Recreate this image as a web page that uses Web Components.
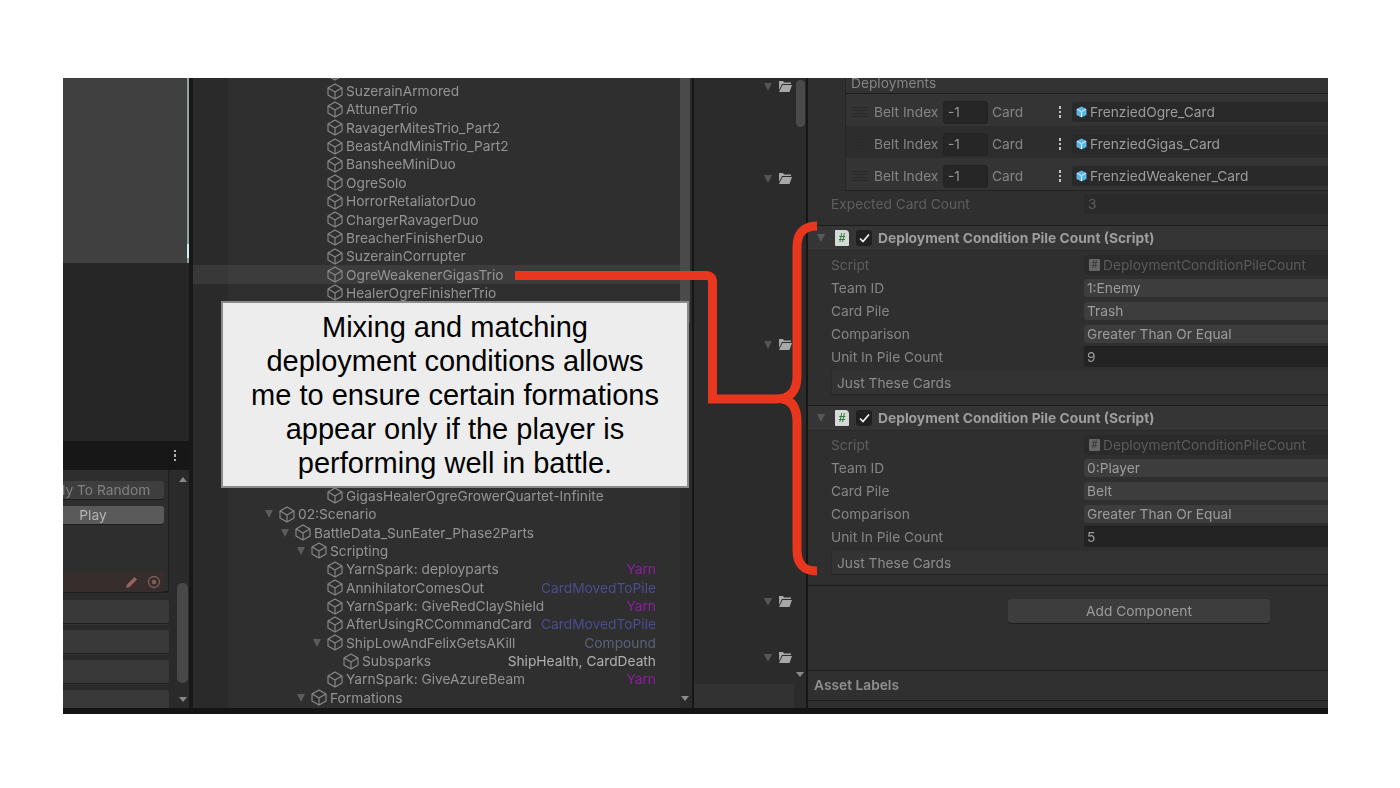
<!DOCTYPE html>
<html>
<head>
<meta charset="utf-8">
<title>Deployment conditions</title>
<style>
  html, body { margin: 0; background: #fff; }
  body { padding: 78px 72px 74px 63px; font-family: Inter, "Liberation Sans", sans-serif; }
</style>
</head>
<body>
<editor-shot>
  <left-dock></left-dock>
  <tree-panel></tree-panel>
  <project-panel></project-panel>
  <inspector-panel></inspector-panel>
  <connector-line slot="over"></connector-line>
  <callout-box slot="over">Mixing and matching<br>deployment conditions allows<br>me to ensure certain formations<br>appear only if the player is<br>performing well in battle.</callout-box>
</editor-shot>

<script>
const cubeIcon = `<svg width="16" height="17" viewBox="0 0 16 17" fill="none" stroke="#8c8c8c" stroke-width="1.1" stroke-linejoin="round"><path d="M8 1.1 15 5v7.100L8 16 1 12.100V5Z"/><path d="M1.200 5.100 8 9l6.800-3.900M8 9v6.800"/></svg>`

const makeEl = (name, css, html) => {
  customElements.define(name, class extends HTMLElement {
    constructor() {
      super()
      const root = this.attachShadow({ mode: 'open' })
      root.innerHTML = `<style>${css}</style>${typeof html === 'function' ? html(this) : html}`
    }
  })
}

makeEl('editor-shot', `
  :host { display: block; position: relative; width: 1265px; height: 636px; overflow: hidden; background: #141414; }
  .panels { display: flex; height: 630px; filter: blur(.45px); }
`, `<div class="panels"><slot></slot></div><slot name="over"></slot>`)

makeEl('connector-line', `
  :host { display: block; position: absolute; inset: 0; pointer-events: none; }
  svg { display: block; }
`, `<svg width="1265" height="636" viewBox="63 78 1265 636" fill="none" stroke="#e8361f" stroke-width="9">
  <path d="M515 275.5H706q6.500 0 6.500 6.500V399H776Q797 399 797 376V247Q797 226 817 226"/>
  <path d="M782 399Q797 401 797 422V550Q797 571 817 571"/>
</svg>`)

makeEl('callout-box', `
  :host {
    display: flex; align-items: center; justify-content: center; position: absolute; left: 158px; top: 223px;
    box-sizing: border-box; width: 468px; height: 187px; padding-top: 1px; background: #ededed; border: 2px solid #8a8a8a;
    font: 29px/34px "Liberation Sans", Arial, sans-serif; color: #000; text-align: center; white-space: nowrap;
  }
`, `<div><slot></slot></div>`)

makeEl('left-dock', `
  :host { display: flex; flex-direction: column; flex: none; box-sizing: border-box; width: 130px; border-right: 4px solid #181818; font-size: 13.750px; overflow: hidden; }
  .game { height: 185px; background: #404040; border-right: 2px solid #8ca4a4; position: relative; flex: none; }
  .game i { position: absolute; right: -2px; top: 166px; width: 2px; height: 14px; background: #cfeeee; }
  .blank { height: 178px; background: #262626; flex: none; }
  .tab { height: 29px; background: #171717; flex: none; display: flex; justify-content: flex-end; align-items: center; padding-right: 13px; }
  .tab b { display: flex; flex-direction: column; gap: 2px; }
  .tab b i { width: 2.500px; height: 2.500px; background: #b0b0b0; }
  .body { flex: 1; display: flex; background: #2a2a2a; min-height: 0; }
  .stack { width: 106px; flex: none; overflow: hidden; display: flex; flex-direction: column; }
  .group { height: 123px; background: #2e2e2e; border: solid #1f1f1f; border-width: 0 1px 2px 0; border-radius: 0 0 3px 0; flex: none; box-sizing: border-box; display: flex; flex-direction: column; align-items: flex-end; padding: 11px 4px 0 0; }
  .btn { flex: none; width: 142px; height: 18px; border-radius: 3px; background: #3e3e3e; color: #808080; text-align: center; line-height: 18px; box-shadow: 0 1px 0 #1d1d1d; white-space: nowrap; }
  .btn.play { margin-top: 7px; background: #5a5a5a; color: #b4b4b4; }
  .pick { margin-top: 48px; width: 142px; height: 20px; flex: none; background: #382d2d; border-radius: 3px; display: flex; justify-content: flex-end; align-items: center; gap: 8px; padding-right: 3px; box-sizing: border-box; }
  .row { flex: none; height: 23px; margin-top: 7px; background: #393939; box-shadow: 0 1px 0 #1e1e1e, 0 2px 0 #333; border-radius: 0 2px 2px 0; }
  .row.first { margin-top: 7px; }
  .bar { width: 20px; flex: none; position: relative; }
  .bar i { position: absolute; left: 10px; width: 0; height: 0; border: solid transparent; border-width: 0 4px; }
  .up { top: 7px; border-bottom: 5px solid #888 !important; }
  .down { top: 227px; border-top: 5px solid #888 !important; }
  .thumb { position: absolute; left: 8px; top: 113px; width: 11px; height: 100px; background: #484848; border-radius: 5px; }
`, `
  <div class="game"><i></i></div>
  <div class="blank"></div>
  <div class="tab"><b><i></i><i></i><i></i></b></div>
  <div class="body">
    <div class="stack">
      <div class="group">
        <div class="btn">Apply To Random</div>
        <div class="btn play">Play</div>
        <div class="pick">
          <svg width="14" height="14" viewBox="0 0 14 14"><path d="M1 13 2 9.500 9.500 2 12 4.500 4.500 12Z" fill="#96665e"/></svg>
          <svg width="14" height="14" viewBox="0 0 14 14" fill="none" stroke="#7c605b" stroke-width="1.300"><circle cx="7" cy="7" r="5.500"/><circle cx="7" cy="7" r="1.700" fill="#7c605b"/></svg>
        </div>
      </div>
      <div class="row first"></div><div class="row"></div><div class="row"></div><div class="row"></div>
    </div>
    <div class="bar"><i class="up"></i><div class="thumb"></div><i class="down"></i></div>
  </div>
`)

customElements.define('tree-row', class extends HTMLElement {
  constructor() {
    super()
    const root = this.attachShadow({ mode: 'open' })
    const d = this.dataset
    root.innerHTML = `
      <style>
        :host { display: flex; align-items: center; height: 18.370px; box-sizing: border-box; padding-right: 24px; white-space: nowrap; color: #949494; font-size: 13.750px; }
        :host([data-selected]) { background: rgba(255,255,255,.065); }
        .arrow { width: 14px; flex: none; height: 8px; display: flex; align-items: center; }
        .arrow i { width: 0; height: 0; border: solid transparent; border-width: 8px 4.500px 0; border-top-color: #5c5c5c; }
        svg { flex: none; margin-right: 3px; }
        .tag { margin-left: auto; }
      </style>
      <span class="arrow">${d.open ? '<i></i>' : ''}</span>${cubeIcon}<span><slot></slot></span>
      ${d.tag ? `<span class="tag" style="color:${d.color}">${d.tag}</span>` : ''}`
    this.style.paddingLeft = (72 + 16 * Number(d.depth)) + 'px'
  }
})

makeEl('tree-panel', `
  :host { display: flex; flex: none; width: 501px; box-sizing: border-box; border-right: 2px solid #161616; overflow: hidden; background: #2f2f2f; }
  .rows { width: 487px; flex: none; background: linear-gradient(90deg, #2a2a2a 35px, #2f2f2f 35px); margin-top: -14.500px; }
  .gap { height: 184.500px; }
  .bar { width: 12px; flex: none; position: relative; background: #2b2b2b; }
  .thumb { width: 10px; height: 245px; background: #4a4a4a; }
  .down { position: absolute; left: 1px; top: 618px; width: 0; height: 0; border: solid transparent; border-width: 5px 4.500px 0; border-top-color: #8a8a8a; }
`, `
  <div class="rows">
    <tree-row data-depth="3"></tree-row>
    <tree-row data-depth="3">SuzerainArmored</tree-row>
    <tree-row data-depth="3">AttunerTrio</tree-row>
    <tree-row data-depth="3">RavagerMitesTrio_Part2</tree-row>
    <tree-row data-depth="3">BeastAndMinisTrio_Part2</tree-row>
    <tree-row data-depth="3">BansheeMiniDuo</tree-row>
    <tree-row data-depth="3">OgreSolo</tree-row>
    <tree-row data-depth="3">HorrorRetaliatorDuo</tree-row>
    <tree-row data-depth="3">ChargerRavagerDuo</tree-row>
    <tree-row data-depth="3">BreacherFinisherDuo</tree-row>
    <tree-row data-depth="3">SuzerainCorrupter</tree-row>
    <tree-row data-depth="3" data-selected>OgreWeakenerGigasTrio</tree-row>
    <tree-row data-depth="3">HealerOgreFinisherTrio</tree-row>
    <div class="gap"></div>
    <tree-row data-depth="3">GigasHealerOgreGrowerQuartet-Infinite</tree-row>
    <tree-row data-depth="0" data-open="1">02:Scenario</tree-row>
    <tree-row data-depth="1" data-open="1">BattleData_SunEater_Phase2Parts</tree-row>
    <tree-row data-depth="2" data-open="1">Scripting</tree-row>
    <tree-row data-depth="3" data-tag="Yarn" data-color="#8f1ca3">YarnSpark: deployparts</tree-row>
    <tree-row data-depth="3" data-tag="CardMovedToPile" data-color="#4f4b8f">AnnihilatorComesOut</tree-row>
    <tree-row data-depth="3" data-tag="Yarn" data-color="#8f1ca3">YarnSpark: GiveRedClayShield</tree-row>
    <tree-row data-depth="3" data-tag="CardMovedToPile" data-color="#4f4b8f">AfterUsingRCCommandCard</tree-row>
    <tree-row data-depth="3" data-open="1" data-tag="Compound" data-color="#5c6078">ShipLowAndFelixGetsAKill</tree-row>
    <tree-row data-depth="4" data-tag="ShipHealth, CardDeath" data-color="#b0b0b0">Subsparks</tree-row>
    <tree-row data-depth="3" data-tag="Yarn" data-color="#8f1ca3">YarnSpark: GiveAzureBeam</tree-row>
    <tree-row data-depth="2" data-open="1">Formations</tree-row>
  </div>
  <div class="bar"><div class="thumb"></div><i class="down"></i></div>
`)

customElements.define('folder-row', class extends HTMLElement {
  constructor() {
    super()
    const root = this.attachShadow({ mode: 'open' })
    root.innerHTML = `
      <style>
        :host { display: flex; align-items: center; gap: 7px; position: absolute; left: 70px; }
        i { width: 0; height: 0; border: solid transparent; border-width: 8px 4.500px 0; border-top-color: #555; }
      </style>
      <i></i>
      <svg width="13" height="11" viewBox="0 0 13 11"><path d="M0 0H4L5 1.500H12V3H3L0 9Z M3.500 4H13L10.500 11H0Z" fill="#a8a8a8"/></svg>`
    this.style.top = this.dataset.top + 'px'
  }
})

makeEl('project-panel', `
  :host { display: flex; flex: none; width: 114px; box-sizing: border-box; border-right: 2px solid #161616; background: #2b2b2b; }
  .list { position: relative; width: 100px; flex: none; }
  .tail { position: absolute; left: 0; right: 0; top: 606px; height: 24px; background: #323232; }
  .bar { width: 12px; flex: none; position: relative; }
  .thumb { margin: 2px 0 0 2px; width: 9px; height: 47px; background: #4a4a4a; border-radius: 5px; }
  .down { position: absolute; left: 2px; top: 594px; width: 0; height: 0; border: solid transparent; border-width: 5px 4.500px 0; border-top-color: #8a8a8a; }
`, `
  <div class="list">
    <folder-row data-top="3"></folder-row>
    <folder-row data-top="95"></folder-row>
    <folder-row data-top="261"></folder-row>
    <folder-row data-top="518"></folder-row>
    <folder-row data-top="574"></folder-row>
    <div class="tail"></div>
  </div>
  <div class="bar"><div class="thumb"></div><i class="down"></i></div>
`)

customElements.define('list-row', class extends HTMLElement {
  constructor() {
    super()
    const root = this.attachShadow({ mode: 'open' })
    root.innerHTML = `
      <style>
        :host { display: flex; align-items: center; box-sizing: border-box; height: 32px; padding-top: 4px; background: #343434; color: #858585; font-size: 13.750px; white-space: nowrap; }
        :host(:nth-of-type(2n)) { background: #2d2d2d; }
        .grip { width: 16px; height: 10px; margin: 0 6px 0 6px; flex: none; background: repeating-linear-gradient(#2a2a2a 0 1px, transparent 1px 3px); }
        .label { width: 70px; flex: none; }
        .num { width: 43px; height: 21px; flex: none; box-sizing: border-box; padding-left: 4px; line-height: 20px; background: #262626; border-radius: 3px; box-shadow: 0 0 0 1px #222; color: #939393; }
        .card { width: 68px; padding-left: 5px; flex: none; box-sizing: content-box; }
        .dots { width: 12px; display: flex; flex-direction: column; align-items: center; gap: 2px; flex: none; }
        .dots i { width: 2.500px; height: 2.500px; background: #c4c4c4; }
        .obj { flex: 1; margin-left: 6px; height: 20px; display: flex; align-items: center; gap: 3px; padding-left: 4px; background: #292929; border-radius: 3px 0 0 3px; color: #9c9c9c; }
        svg { flex: none; }
      </style>
      <span class="grip"></span><span class="label">Belt Index</span><span class="num">-1</span><span class="card" style="width:52px">Card</span>
      <span class="dots" style="margin-left:10px"><i></i><i></i><i></i></span>
      <span class="obj">
        <svg width="11" height="12" viewBox="0 0 11 12"><path d="M5.500 .5 10.500 3v6L5.500 11.500.5 9V3Z" fill="#5cb6e4"/><path d="M1 3.200 5.500 5.700 10 3.200M5.500 5.700V11" fill="none" stroke="#dff3ff" stroke-width="1"/></svg>
        <slot></slot>
      </span>`
  }
})

customElements.define('comp-block', class extends HTMLElement {
  constructor() {
    super()
    const root = this.attachShadow({ mode: 'open' })
    const d = this.dataset
    root.innerHTML = `
      <style>
        :host { display: block; box-sizing: border-box; height: 180px; border-top: 1px solid #1b1b1b; font-size: 13.750px; color: #868686; white-space: nowrap; }
        .head { display: flex; align-items: center; height: 24px; background: #353535; border-bottom: 1px solid #292929; padding-left: 9px; }
        .head i { width: 0; height: 0; border: solid transparent; border-width: 8px 4.500px 0; border-top-color: #585858; margin-right: 9px; }
        .page { width: 14px; height: 16px; background: #d6dad6; border-radius: 1px 4px 1px 1px; color: #2f7a3a; font: bold 12px/16px "Liberation Sans", sans-serif; text-align: center; margin-left: 1px; margin-right: 7px; }
        .check { width: 16px; height: 16px; background: #1f1f1f; border-radius: 3px; display: flex; align-items: center; justify-content: center; margin-right: 6px; }
        b { color: #9e9e9e; font-weight: 700; font-size: 13.800px; }
        .fields { padding: 2px 0 0 23px; display: grid; grid-template-columns: 253px 1fr; grid-auto-rows: 23px; align-items: center; }
        .val { box-sizing: border-box; padding-left: 3px; border-radius: 3px 0 0 3px; height: 18px; line-height: 18px; background: #3d3d3d; color: #9c9c9c; }
        .dim { color: #5e5e5e; }
        .val.dim { background: #2a2a2a; height: 20px; line-height: 20px; display: flex; align-items: center; gap: 3px; color: #5a5a5a; padding-left: 5px; }
        .val.dim u { width: 11px; height: 12px; background: #666; border-radius: 1px; color: #3a3a3a; font: bold 10px/12px "Liberation Sans", sans-serif; text-align: center; text-decoration: none; }
        .val.in { background: #232323; height: 20px; line-height: 20px; box-shadow: 0 -1px 0 #1c1c1c; }
        .list { margin: 3px 0 0 23px; height: 24px; box-sizing: border-box; line-height: 25px; padding-left: 5px; background: #333; border-bottom: 1px solid #222; border-left: 1px solid #2a2a2a; color: #8c8c8c; }
      </style>
      <div class="head">
        <i></i><span class="page">#</span>
        <span class="check"><svg width="11" height="10" viewBox="0 0 11 10" fill="none" stroke="#f0f0f0" stroke-width="1.700"><path d="M1 5.500 4 8.500 10 1.500"/></svg></span>
        <b>Deployment Condition Pile Count (Script)</b>
      </div>
      <div class="fields">
        <span class="dim">Script</span><span class="val dim"><u>#</u>DeploymentConditionPileCount</span>
        <span>Team ID</span><span class="val">${d.team}</span>
        <span>Card Pile</span><span class="val">${d.pile}</span>
        <span>Comparison</span><span class="val">Greater Than Or Equal</span>
        <span>Unit In Pile Count</span><span class="val in">${d.count}</span>
      </div>
      <div class="list">Just These Cards</div>`
  }
})

makeEl('inspector-panel', `
  :host { display: flex; flex-direction: column; flex: none; width: 520px; background: #2f2f2f; overflow: hidden; font-size: 13.750px; color: #858585; white-space: nowrap; }
  .deploy { margin-left: 37px; height: 15px; line-height: 10px; padding-left: 5px; border-bottom: 1px solid #1d1d1d; border-left: 1px solid #262626; background: #333; overflow: hidden; flex: none; }
  .items { margin-left: 37px; border-left: 1px solid #262626; border-bottom: 1px solid #222; flex: none; }
  .expected { display: grid; grid-template-columns: 253px 1fr; align-items: center; height: 20px; margin: 3px 0 11px 23px; color: #5e5e5e; flex: none; }
  .expected span + span { background: #2a2a2a; height: 20px; line-height: 20px; padding-left: 4px; border-radius: 3px 0 0 3px; }
  .end { border-top: 1px solid #1b1b1b; flex: none; padding: 13px 0 0 200px; display: flex; }
  .add { width: 262px; height: 24px; line-height: 24px; text-align: center; background: #3d3d3d; color: #9c9c9c; border-radius: 3px; box-shadow: 0 1px 0 #1f1f1f; }
  .labels { margin-top: auto; height: 29px; line-height: 28px; padding-left: 6px; border-top: 1px solid #1d1d1d; border-bottom: 1px solid #1d1d1d; background: #303030; font-weight: 600; color: #909090; flex: none; }
  .foot { height: 7px; flex: none; }
`, `
  <div class="deploy">Deployments</div>
  <div class="items">
    <list-row>FrenziedOgre_Card</list-row>
    <list-row>FrenziedGigas_Card</list-row>
    <list-row>FrenziedWeakener_Card</list-row>
  </div>
  <div class="expected"><span>Expected Card Count</span><span>3</span></div>
  <comp-block data-team="1:Enemy" data-pile="Trash" data-count="9"></comp-block>
  <comp-block data-team="0:Player" data-pile="Belt" data-count="5"></comp-block>
  <div class="end"><div class="add">Add Component</div></div>
  <div class="labels">Asset Labels</div>
  <div class="foot"></div>
`)
</script>
</body>
</html>
